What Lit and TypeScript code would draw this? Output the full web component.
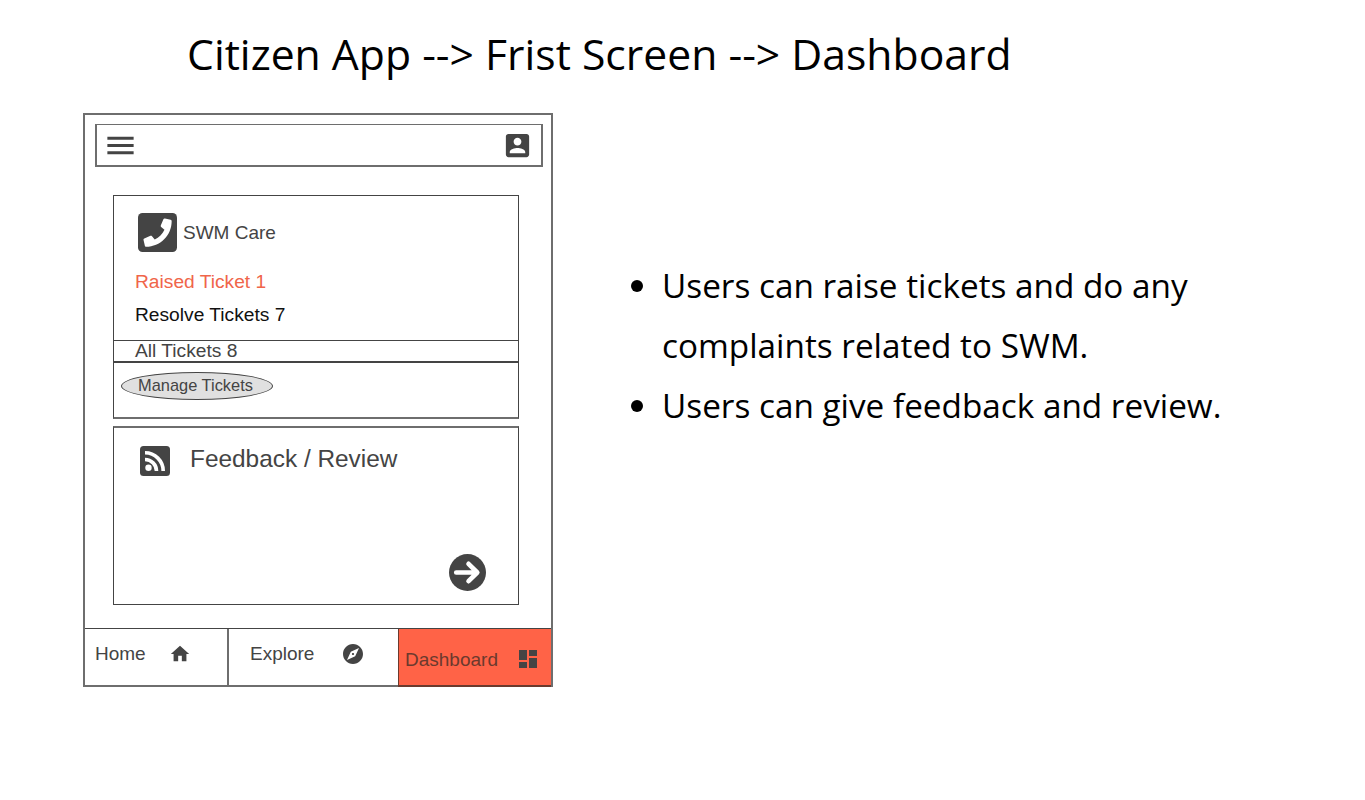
import { LitElement, css, html, svg } from "lit";
import { customElement } from "lit/decorators.js";

const materialIcon = (d: string, size: number) =>
  html`<svg class="icon" width=${size} height=${size} viewBox="0 0 24 24">
    ${svg`<path d=${d} fill="#444"></path>`}
  </svg>`;

const MENU = "M3 18h18v-2H3v2zm0-5h18v-2H3v2zm0-7v2h18V6H3z";
const ACCOUNT =
  "M3 5v14c0 1.1.89 2 2 2h14c1.1 0 2-.9 2-2V5c0-1.1-.9-2-2-2H5c-1.11 0-2 .9-2 2zm12 4c0 1.66-1.34 3-3 3s-3-1.34-3-3 1.34-3 3-3 3 1.34 3 3zm-9 8c0-2 4-3.1 6-3.1s6 1.1 6 3.1v1H6v-1z";
const HOME = "M10 20v-6h4v6h5v-8h3L12 3 2 12h3v8z";
const EXPLORE =
  "M12 10.9c-.61 0-1.1.49-1.1 1.1s.49 1.1 1.1 1.1c.61 0 1.1-.49 1.1-1.1s-.49-1.1-1.1-1.1zM12 2C6.48 2 2 6.48 2 12s4.48 10 10 10 10-4.48 10-10S17.52 2 12 2zm2.19 12.19L6 18l3.81-8.19L18 6l-3.81 8.19z";
const DASHBOARD = "M3 13h8V3H3v10zm0 8h8v-6H3v6zm10 0h8V11h-8v10zm0-18v6h8V3h-8z";

const phoneSquare = html`<svg class="icon" width="39" height="39" viewBox="0 0 39 39">
  <rect width="39" height="39" rx="4.5" fill="#444"></rect>
  <path
    transform="translate(5.500 5.500) scale(0.055)"
    d="M493.4 24.6l-104-24c-11.3-2.6-22.9 3.3-27.5 13.9l-48 112c-4.2 9.8-1.4 21.3 6.9 28l60.600 49.600c-36 76.700-98.900 140.500-177.200 177.200l-49.600-60.600c-6.800-8.300-18.200-11.100-28-6.900l-112 48C3.900 366.500-2 378.100.6 389.400l24 104C27.100 504.200 36.700 512 48 512c256.100 0 464-207.500 464-464 0-11.200-7.700-20.900-18.600-23.400z"
    fill="#fff"
  ></path>
</svg>`;

const rssSquare = html`<svg class="icon" width="30" height="30" viewBox="0 0 30 30">
  <rect width="30" height="30" rx="3.500" fill="#444"></rect>
  <circle cx="8.500" cy="21.800" r="3.200" fill="#fff"></circle>
  <path d="M5 13.500a11.500 11.500 0 0 1 11.500 11.500" fill="none" stroke="#fff" stroke-width="3.600"></path>
  <path d="M5 6.800a18.200 18.200 0 0 1 18.200 18.200" fill="none" stroke="#fff" stroke-width="3.600"></path>
</svg>`;

const arrowCircle = html`<svg class="icon" width="37" height="37" viewBox="0 0 36 36">
  <circle cx="18" cy="18" r="18" fill="#444"></circle>
  <path
    d="M7 18h20M19 9.500l8.500 8.500-8.500 8.500"
    fill="none"
    stroke="#fff"
    stroke-width="4.500"
    stroke-linecap="round"
    stroke-linejoin="round"
  ></path>
</svg>`;

@customElement("app-root")
export class AppRoot extends LitElement {
  static styles = css`
    :host {
      display: block;
      height: 800px;
      background: #fff;
      overflow: hidden;
      font-family: "Liberation Sans", Arial, sans-serif;
      color: #444;
    }
    .icon {
      display: block;
      flex: none;
    }
    h1 {
      margin: 0;
      padding: 24px 0 0 187px;
      height: 113px;
      box-sizing: border-box;
      font: 400 42.680px/60px "Open Sans", sans-serif;
      color: #000;
    }
    .main {
      display: flex;
      padding-left: 83px;
    }

    /* phone frame */
    .phone {
      width: 470px;
      height: 574px;
      box-sizing: border-box;
      border: 2px solid #6e6e6e;
      display: flex;
      flex-direction: column;
    }
    .topbar {
      height: 43px;
      box-sizing: border-box;
      margin: 9px 8px 0 10px;
      border: 2px solid #6e6e6e;
      border-top-width: 1px;
      display: flex;
      align-items: center;
      justify-content: space-between;
      padding: 0 8px 0 6px;
    }
    .card {
      margin-left: 28px;
      width: 406px;
      box-sizing: border-box;
      border: 1px solid #444;
    }
    .care {
      margin-top: 28px;
      height: 224px;
      border-bottom: 2px solid #6e6e6e;
    }
    .care-head {
      display: flex;
      align-items: center;
      gap: 6px;
      padding: 17px 0 0 24px;
      font-size: 19px;
    }
    .ticket {
      padding-left: 21px;
      font-size: 19.200px;
      line-height: 22px;
    }
    .raised {
      margin-top: 19px;
      color: #f0654a;
    }
    .resolved {
      margin-top: 11px;
      color: #111;
    }
    .all {
      margin: 14px -1px 0;
      height: 23px;
      box-sizing: border-box;
      border: 1px solid #444;
      border-bottom-width: 2px;
      line-height: 20px;
      padding-left: 21px;
    }
    .manage {
      margin: 9px 0 0 7px;
      width: 152px;
      height: 28px;
      box-sizing: border-box;
      border: 1px solid #444;
      border-radius: 50%;
      background: #e0e0e0;
      padding-right: 3px;
      font-size: 16.400px;
      line-height: 24px;
      text-align: center;
    }
    .feedback {
      margin-top: 7px;
      height: 179px;
      border-top: 2px solid #6e6e6e;
      padding: 17px 32px 0 26px;
      display: flex;
      flex-direction: column;
    }
    .feedback-head {
      display: flex;
      align-items: flex-start;
      gap: 20px;
      font-size: 24.400px;
      line-height: 28px;
    }
    .feedback-head .icon {
      margin-top: 1px;
    }
    .feedback .next {
      margin: 78px 0 0 auto;
    }

    /* bottom tabs */
    .tabs {
      margin-top: auto;
      height: 57px;
      box-sizing: border-box;
      border-top: 1px solid #444;
      display: flex;
      font-size: 19px;
    }
    .tab {
      box-sizing: border-box;
      display: flex;
      align-items: center;
      padding-bottom: 6px;
    }
    .home {
      width: 144px;
      padding-left: 10px;
      gap: 23px;
      border-right: 2px solid #6e6e6e;
    }
    .explore {
      width: 169px;
      padding-left: 21px;
      gap: 27px;
    }
    .dash {
      flex: 1;
      background: #ff6347;
      border-left: 1px solid #6b3a2e;
      border-bottom: 2px solid #6b3a2e;
      padding: 3px 0 0 6px;
      gap: 18px;
      margin-bottom: -2px;
      color: #6b3a2e;
    }
    .dash span {
      margin-top: 3px;
    }

    /* notes */
    ul {
      margin: 142px 0 0;
      padding: 0 0 0 109px;
      width: 600px;
      font: 400 33.300px/60px "Open Sans", sans-serif;
      color: #000;
    }
  `;

  render() {
    return html`
      <h1>Citizen App --&gt; Frist Screen --&gt; Dashboard</h1>
      <div class="main">
        <div class="phone">
          <div class="topbar">
            ${materialIcon(MENU, 35)} ${materialIcon(ACCOUNT, 31)}
          </div>
          <div class="card care">
            <div class="care-head">${phoneSquare}<span>SWM Care</span></div>
            <div class="ticket raised">Raised Ticket 1</div>
            <div class="ticket resolved">Resolve Tickets 7</div>
            <div class="ticket all">All Tickets 8</div>
            <div class="manage">Manage Tickets</div>
          </div>
          <div class="card feedback">
            <div class="feedback-head">${rssSquare}<span>Feedback / Review</span></div>
            <div class="next">${arrowCircle}</div>
          </div>
          <div class="tabs">
            <div class="tab home"><span>Home</span>${materialIcon(HOME, 22)}</div>
            <div class="tab explore"><span>Explore</span>${materialIcon(EXPLORE, 24)}</div>
            <div class="tab dash"><span>Dashboard</span>${materialIcon(DASHBOARD, 24)}</div>
          </div>
        </div>
        <ul>
          <li>Users can raise tickets and do any complaints related to SWM.</li>
          <li>Users can give feedback and review.</li>
        </ul>
      </div>
    `;
  }
}
